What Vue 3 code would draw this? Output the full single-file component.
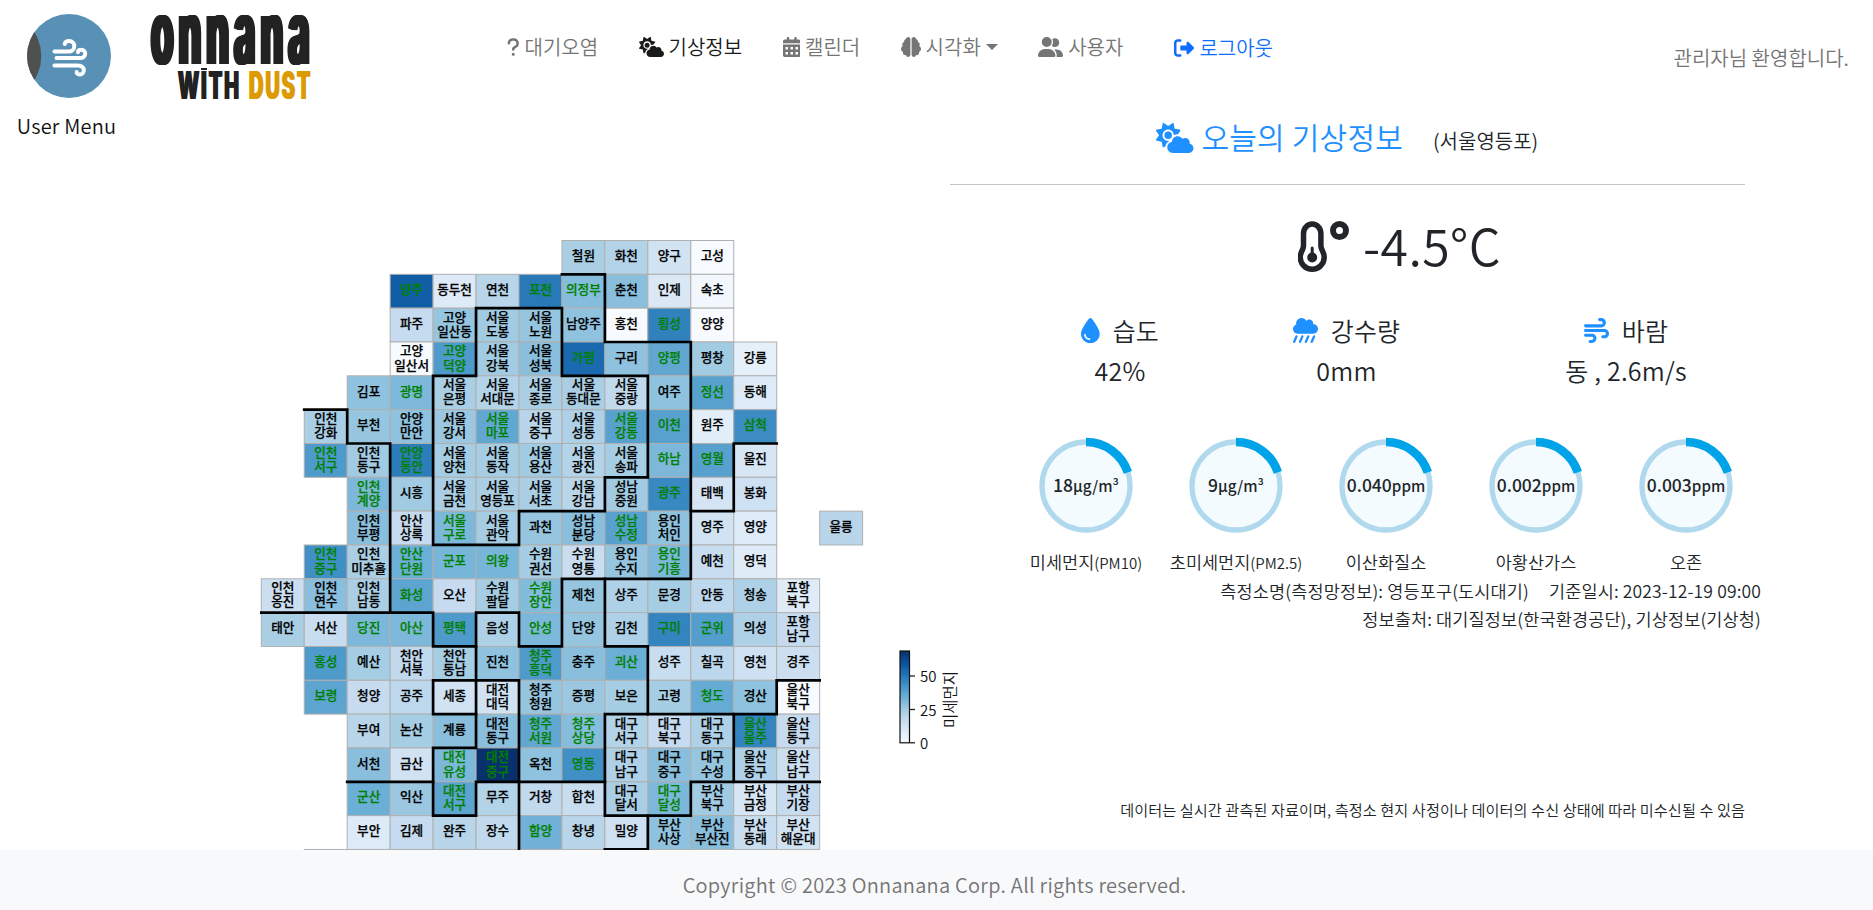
<script setup>
const paths = {
  question: ['0 0 320 512', 'M80 160c0-35.3 28.7-64 64-64h32c35.3 0 64 28.7 64 64v3.6c0 21.8-11.1 42.1-29.4 53.8l-42.2 27.1c-25.2 16.2-40.4 44.1-40.4 74V320c0 17.7 14.3 32 32 32s32-14.3 32-32v-1.4c0-8.2 4.2-15.8 11-20.2l42.2-27.1c36.6-23.6 58.8-64.1 58.8-107.7V160c0-70.7-57.3-128-128-128H144C73.3 32 16 89.3 16 160c0 17.7 14.3 32 32 32s32-14.3 32-32zm80 320a40 40 0 1 0 0-80 40 40 0 1 0 0 80z'],
  cloudSun: ['0 0 640 512', 'M294.2 1.2c5.1 2.1 8.7 6.7 9.6 12.1l14.1 84.7 84.7 14.1c5.4 .9 10 4.5 12.1 9.6s1.5 10.9-1.6 15.4l-38.5 55c-2.2-.1-4.4-.2-6.7-.2c-23.3 0-45.1 6.2-64 17.1l0-1.1c0-53-43-96-96-96s-96 43-96 96s43 96 96 96c8.1 0 15.9-1 23.4-2.9c-36.6 18.1-63.3 53.1-69.8 94.9l-24.4 17c-4.5 3.2-10.3 3.8-15.4 1.6s-8.7-6.7-9.6-12.1L98.1 317.9 13.4 303.8c-5.4-.9-10-4.5-12.1-9.6s-1.5-10.9 1.6-15.4L52.5 208 2.9 137.2c-3.2-4.5-3.8-10.3-1.6-15.4s6.7-8.7 12.1-9.6L98.1 98.1l14.1-84.7c.9-5.4 4.5-10 9.6-12.1s10.9-1.5 15.4 1.6L208 52.5 278.8 2.9c4.5-3.2 10.3-3.8 15.4-1.6zM144 208a64 64 0 1 1 128 0 64 64 0 1 1 -128 0zM639.9 431.9c0 44.2-35.8 80-80 80H288c-53 0-96-43-96-96c0-47.6 34.6-87 80-94.6l0-1.3c0-53 43-96 96-96c34.9 0 65.4 18.6 82.2 46.4c13-9.1 28.8-14.4 45.8-14.4c44.2 0 80 35.8 80 80c0 5.9-.6 11.7-1.9 17.2c37.4 6.7 65.8 39.4 65.8 78.7z'],
  calendar: ['0 0 448 512', 'M128 0c17.7 0 32 14.3 32 32V64H288V32c0-17.7 14.3-32 32-32s32 14.3 32 32V64h48c26.500 0 48 21.500 48 48v48H0V112C0 85.500 21.500 64 48 64H96V32c0-17.700 14.300-32 32-32zM0 192H448V464c0 26.500-21.500 48-48 48H48c-26.500 0-48-21.500-48-48zM64 256v64h64v-64zm128 0v64h64v-64zm128 0v64h64v-64zM64 384v64h64v-64zm128 0v64h64v-64zm128 0v64h64v-64z'],
  brain: ['0 0 512 512', 'M184 0c30.9 0 56 25.1 56 56V456c0 30.9-25.1 56-56 56c-28.9 0-52.7-21.900-55.700-50.100c-5.200 1.400-10.700 2.100-16.300 2.100c-35.300 0-64-28.700-64-64c0-7.400 1.300-14.600 3.600-21.200C21.400 367.400 0 338.200 0 304c0-31.900 18.700-59.500 45.800-72.300C37.100 220.800 32 207 32 192c0-30.700 21.600-56.300 50.400-62.600C80.800 123.900 80 118 80 112c0-29.900 20.600-55.100 48.300-62.100C131.300 21.900 155.100 0 184 0zM328 0c28.900 0 52.700 21.900 55.700 49.900C411.400 56.900 432 82.100 432 112c0 6-.8 11.900-2.400 17.400C458.400 135.700 480 161.300 480 192c0 15-5.100 28.800-13.800 39.700C493.300 244.500 512 272.100 512 304c0 34.200-21.400 63.400-51.600 74.800c2.300 6.600 3.600 13.800 3.600 21.200c0 35.300-28.700 64-64 64c-5.600 0-11.100-.7-16.300-2.100C380.700 490.100 356.900 512 328 512c-30.900 0-56-25.100-56-56V56c0-30.900 25.100-56 56-56z'],
  users: ['0 0 640 512', 'M96 128a128 128 0 1 1 256 0A128 128 0 1 1 96 128zM0 482.300C0 383.800 79.800 304 178.300 304h91.400C368.200 304 448 383.800 448 482.300c0 16.400-13.300 29.700-29.700 29.700H29.700C13.300 512 0 498.700 0 482.300zM609.300 512H471.400c5.400-9.400 8.600-20.300 8.600-32v-8c0-60.700-27.100-115.200-69.800-151.800c2.400-.1 4.700-.2 7.100-.2h61.400C567.800 320 640 392.200 640 481.300c0 17-13.800 30.700-30.700 30.700zM432 256c-31 0-59-12.600-79.300-32.900C372.400 196.500 384 163.600 384 128c0-26.800-6.600-52.100-18.300-74.300C384.300 40.100 407.200 32 432 32c61.900 0 112 50.100 112 112s-50.100 112-112 112z'],
  logout: ['0 0 512 512', 'M377.900 105.900L500.700 228.700c7.200 7.200 11.300 17.100 11.300 27.300s-4.100 20.100-11.300 27.300L377.900 406.100c-6.400 6.400-15 9.900-24 9.900c-18.700 0-33.900-15.200-33.900-33.900l0-62.100-128 0c-17.700 0-32-14.300-32-32l0-64c0-17.700 14.300-32 32-32l128 0 0-62.100c0-18.700 15.200-33.900 33.900-33.900c9 0 17.600 3.600 24 9.900zM160 96L96 96c-17.700 0-32 14.300-32 32l0 256c0 17.700 14.300 32 32 32l64 0c17.700 0 32 14.300 32 32s-14.300 32-32 32l-64 0c-53 0-96-43-96-96L0 128C0 75 43 32 96 32l64 0c17.700 0 32 14.300 32 32s-14.300 32-32 32z'],
  drop: ['0 0 384 512', 'M192 512C86 512 0 426 0 320C0 228.800 130.200 57.700 166.600 11.700C172.600 4.200 181.500 0 191.100 0h1.800c9.600 0 18.500 4.200 24.500 11.700C253.800 57.700 384 228.800 384 320c0 106-86 192-192 192zM96 336c0-8.800-7.200-16-16-16s-16 7.200-16 16c0 61.900 50.100 112 112 112c8.800 0 16-7.200 16-16s-7.200-16-16-16c-44.200 0-80-35.800-80-80z'],
  rain: ['0 0 512 512', 'M96 320c-53 0-96-43-96-96c0-42.500 27.600-78.600 65.900-91.200C64.700 126.100 64 119.100 64 112C64 50.100 114.100 0 176 0c43.100 0 80.500 24.300 99.200 60c14.700-17.100 36.500-28 60.800-28c44.200 0 80 35.800 80 80c0 5.500-.6 10.800-1.600 16c.5 0 1.100 0 1.600 0c53 0 96 43 96 96s-43 96-96 96H96zM81.500 353.900c12.200 5.200 17.800 19.300 12.600 31.500l-48 112c-5.200 12.200-19.300 17.800-31.500 12.600S-3.300 490.700 1.900 478.500l48-112c5.200-12.200 19.300-17.800 31.500-12.600zm120 0c12.200 5.200 17.800 19.300 12.600 31.500l-48 112c-5.200 12.200-19.300 17.800-31.500 12.600s-17.800-19.300-12.600-31.500l48-112c5.200-12.200 19.300-17.800 31.500-12.600zm120 0c12.200 5.200 17.800 19.300 12.600 31.500l-48 112c-5.200 12.200-19.300 17.800-31.500 12.600s-17.800-19.300-12.600-31.500l48-112c5.200-12.200 19.300-17.800 31.500-12.600zm120 0c12.200 5.200 17.800 19.300 12.600 31.500l-48 112c-5.200 12.200-19.300 17.800-31.500 12.600s-17.800-19.300-12.600-31.500l48-112c5.200-12.200 19.300-17.800 31.500-12.600z'],
  wind: ['0 0 512 512', 'M288 32c0 17.700 14.300 32 32 32h32c17.700 0 32 14.300 32 32s-14.300 32-32 32H32c-17.700 0-32 14.300-32 32s14.300 32 32 32H352c53 0 96-43 96-96s-43-96-96-96H320c-17.700 0-32 14.300-32 32zm64 352c0 17.700 14.300 32 32 32h32c53 0 96-43 96-96s-43-96-96-96H32c-17.700 0-32 14.300-32 32s14.300 32 32 32H416c17.700 0 32 14.300 32 32s-14.300 32-32 32H384c-17.700 0-32 14.300-32 32zM128 512h32c53 0 96-43 96-96s-43-96-96-96H32c-17.700 0-32 14.300-32 32s14.300 32 32 32H160c17.700 0 32 14.300 32 32s-14.300 32-32 32H128c-17.700 0-32 14.300-32 32s14.300 32 32 32z'],
}

const nav = [
  { id: 'air', icon: 'question', label: '대기오염' },
  { id: 'active', icon: 'cloudSun', label: '기상정보' },
  { id: 'cal', icon: 'calendar', label: '캘린더' },
  { id: 'viz', icon: 'brain', label: '시각화', caret: true },
  { id: 'user', icon: 'users', label: '사용자' },
  { id: 'out', icon: 'logout', label: '로그아웃' },
]

const stats = [
  { id: 'hum', icon: 'drop', label: '습도', value: '42%' },
  { id: 'rain', icon: 'rain', label: '강수량', value: '0mm' },
  { id: 'wind', icon: 'wind', label: '바람', value: '동 , 2.6m/s' },
]

const gauges = [
  { value: '18', unit: 'μg/m³', label: '미세먼지', sub: '(PM10)' },
  { value: '9', unit: 'μg/m³', label: '초미세먼지', sub: '(PM2.5)' },
  { value: '0.040', unit: 'ppm', label: '이산화질소' },
  { value: '0.002', unit: 'ppm', label: '아황산가스' },
  { value: '0.003', unit: 'ppm', label: '오존' },
]

/* One string per map row: "startColumn|name value,name value"; "/" splits a name over two lines. */
const rowData = [
  '7|철원 23,화천 21,양구 13,고성 0',
  '3|양주 56,동두천 9,연천 20,포천 49,의정부 29.500,춘천 29,인제 10,속초 2',
  '3|파주 17,고양/일산동 27,서울/도봉 25,서울/노원 27,남양주 28,홍천 0,횡성 47,양양 0',
  '3|고양/일산서 0,고양/덕양 40,서울/강북 25,서울/성북 29,가평 53,구리 28,양평 36,평창 25,강릉 6',
  '2|김포 28,광명 31,서울/은평 23,서울/서대문 21,서울/종로 23,서울/동대문 23,서울/중랑 18,여주 28,정선 38,동해 9',
  '1|인천/강화 23,부천 27,안양/만안 28,서울/강서 26,서울/마포 36,서울/중구 20,서울/성동 22,서울/강동 38,이천 38,원주 7,삼척 44',
  '1|인천/서구 40,인천/동구 25,안양/동안 48,서울/양천 24,서울/동작 24,서울/용산 25,서울/광진 21,서울/송파 24,하남 31,영월 38,울진 11',
  '2|인천/계양 31,시흥 25,서울/금천 23,서울/영등포 23,서울/서초 23,서울/강남 20,성남/중원 25,광주 45,태백 12,봉화 14',
  '2|인천/부평 29,안산/상록 17,서울/구로 31,서울/관악 24,과천 27,성남/분당 29,성남/수정 38,용인/처인 28,영주 13,영양 9',
  '1|인천/중구 43,인천/미추홀 23,안산/단원 34,군포 32,의왕 32,수원/권선 24,수원/영통 16,용인/수지 27,용인/기흥 31,예천 16,영덕 8',
  '0|인천/옹진 15,인천/연수 29,인천/남동 23,화성 37,오산 17,수원/팔달 24,수원/장안 30,제천 27,상주 22,문경 24,안동 19,청송 22,포항/북구 8',
  '0|태안 23,서산 16,당진 31,아산 31,평택 40,음성 22,안성 31,단양 27,김천 22,구미 46,군위 39,의성 22,포항/남구 17',
  '1|홍성 40,예산 24,천안/서북 18,천안/동남 24,진천 28,청주/흥덕 40,충주 29,괴산 34,성주 16,칠곡 19,영천 14,경주 15',
  '1|보령 37,청양 17,공주 19,세종 13,대전/대덕 13,청주/청원 27,증평 26,보은 24,고령 24,청도 35,경산 28,울산/북구 0',
  '2|부여 20,논산 24,계룡 29,대전/동구 29,청주/서원 36,청주/상당 29.500,대구/서구 21,대구/북구 17,대구/동구 22,울산/울주 46,울산/동구 17',
  '2|서천 29,금산 13,대전/유성 31,대전/중구 68,옥천 28,영동 43,대구/남구 22,대구/중구 29,대구/수성 27,울산/중구 22,울산/남구 15',
  '2|군산 34,익산 26,대전/서구 37,무주 21,거창 18,합천 16,대구/달서 23,대구/달성 31,부산/북구 25,부산/금정 11,부산/기장 17',
  '2|부안 9,김제 17,완주 20,장수 18,함양 33,창녕 20,밀양 14,부산/사상 28,부산/부산진 29,부산/동래 16,부산/해운대 13',
]

const blues = [[247, 251, 255], [222, 235, 247], [198, 219, 239], [158, 202, 225], [107, 174, 214], [66, 146, 198], [33, 113, 181], [8, 81, 156], [8, 48, 107]]
function shade(v) {
  const t = Math.min(v / 68, 1) * 8
  const i = Math.min(Math.floor(t), 7)
  const f = t - i
  return `rgb(${blues[i].map((c, k) => Math.round(c + (blues[i + 1][k] - c) * f)).join(',')})`
}

const CW = 42.95
const CH = 33.83
const X0 = 11.3
const Y0 = 10.5
const gx = (c) => +(X0 + c * CW).toFixed(2)
const gy = (r) => +(Y0 + r * CH).toFixed(2)

const cells = []
function addCell(col, row, name, v) {
  cells.push({ key: `${col}-${row}`, x: gx(col), y: gy(row), fill: shade(v), lines: name.split('/'), hot: v >= 29.5 })
}
rowData.forEach((line, r) => {
  const [start, list] = line.split('|')
  list.split(',').forEach((item, i) => {
    const [name, v] = item.split(' ')
    addCell(+start + i, r, name, +v)
  })
})
addCell(13, 8, '울릉', 20)

const slivers = [
  { c: 1, v: 29 }, { c: 2, v: 20 }, { c: 3, v: 38 }, { c: 4, v: 23 }, { c: 5, v: 24 }, { c: 6, v: 28 },
].map((s) => ({ x: gx(s.c), fill: shade(s.v) }))

const borders = [
  [[7, 1], [8, 1], [8, 3], [10, 3], [10, 10], [7, 10], [7, 12], [6, 12], [6, 11], [5, 11], [5, 15], [4, 15], [4, 17], [5, 17], [5, 16], [8, 16]],
  [[5, 2], [7, 2], [7, 4], [9, 4], [9, 7], [8, 7], [8, 8], [6, 8], [6, 9], [4, 9], [4, 4], [5, 4], [5, 2]],
  [[12, 6], [11, 6], [11, 8], [10, 8]],
  [[1, 5], [2, 5], [2, 6], [3, 6], [3, 11]],
  [[0, 11], [4, 11], [4, 12], [5, 12]],
  [[5, 13], [4, 13], [4, 14], [5, 14]],
  [[5, 13], [6, 13], [6, 18]],
  [[2, 16], [4, 16]],
  [[8, 10], [8, 12], [9, 12], [9, 14]],
  [[13, 13], [12, 13], [12, 14], [8, 14], [8, 17], [10, 17], [10, 16], [13, 16]],
  [[11, 14], [11, 16]],
  [[9, 17], [9, 18], [8, 18]],
].map((b) => b.map(([c, r]) => `${gx(c)},${gy(r)}`).join(' '))

const stops = blues.map((c, i) => ({ o: i / 8, c: `rgb(${c.join(',')})` }))
const ticks = [{ y: 446, t: '50' }, { y: 479.5, t: '25' }, { y: 512.8, t: '0' }]
</script>

<template>
  <div class="page">
    <header class="header">
      <div class="user-menu">
        <svg class="avatar" viewBox="0 0 84 84">
          <defs><clipPath id="disc"><circle cx="42" cy="42" r="42" /></clipPath></defs>
          <circle cx="42" cy="42" r="42" fill="#5891b5" />
          <circle cx="-30" cy="42" r="44.300" fill="#4f5150" clip-path="url(#disc)" />
          <g fill="none" stroke="#fff" stroke-width="4" stroke-linecap="round">
            <path d="M27.500 37.500H42c7 0 7-10.500 0-10.500c-2.500 0-4 1.500-4.300 3" />
            <path d="M29.500 44H53c7 0 6.500-8.500 1-8.300c-2 0-3 1.300-3 2.600" />
            <path d="M27.500 51.500H51c8 0 7 9.300 1.500 9c-2 0-3-1.300-2.800-2.500" />
          </g>
        </svg>
        <span class="user-label">User Menu</span>
      </div>
      <div class="logo">
        <div class="logo-top">onnana</div>
        <div class="logo-bottom"><span class="with">WITH</span><span class="dust">DUST</span></div>
      </div>
      <nav class="nav">
        <a v-for="n in nav" :key="n.id" :class="['link', n.id]">
          <svg class="ico" :viewBox="paths[n.icon][0]"><path :d="paths[n.icon][1]" fill="currentColor" fill-rule="evenodd" /></svg>
          <span>{{ n.label }}</span>
          <i v-if="n.caret" class="caret"></i>
        </a>
      </nav>
      <span class="welcome">관리자님 환영합니다.</span>
    </header>

    <main class="main">
      <svg class="map" viewBox="0 0 720 620" width="720" height="620">
        <defs>
          <linearGradient id="scale" x1="0" y1="1" x2="0" y2="0">
            <stop v-for="s in stops" :key="s.o" :offset="s.o" :stop-color="s.c" />
          </linearGradient>
        </defs>
        <rect v-for="s in slivers" :key="s.x" class="cell" :x="s.x" :y="gy(18)" :width="CW" height="20" :fill="s.fill" />
        <g v-for="c in cells" :key="c.key">
          <rect class="cell" :x="c.x" :y="c.y" :width="CW" :height="CH" :fill="c.fill" />
          <text
            v-for="(l, i) in c.lines"
            :key="i"
            :class="['name', { hot: c.hot }]"
            :x="c.x + CW / 2"
            :y="c.y + (c.lines.length === 1 ? 19.700 : 13.400 + i * 14.200)"
          >{{ l }}</text>
        </g>
        <polyline v-for="(b, i) in borders" :key="i" class="border" :points="b" />
        <rect x="650" y="421" width="9.500" height="91.800" fill="url(#scale)" stroke="#111" stroke-width="1.200" />
        <g v-for="t in ticks" :key="t.t">
          <line x1="660" x2="665" :y1="t.y" :y2="t.y" stroke="#222" stroke-width="1.300" />
          <text class="tick" x="670" :y="t.y + 6">{{ t.t }}</text>
        </g>
        <text class="axis" transform="translate(706 469.500) rotate(-90)">미세먼지</text>
      </svg>

      <section class="today">
        <h2 class="title">
          <svg class="ico" :viewBox="paths.cloudSun[0]"><path :d="paths.cloudSun[1]" fill="currentColor" fill-rule="evenodd" /></svg>
          <span class="title-text">오늘의 기상정보</span>
          <span class="place">(서울영등포)</span>
        </h2>
        <div class="temp">
          <svg class="thermo" viewBox="0 0 51 51">
            <g fill="none" stroke="currentColor">
              <path stroke-width="5.500" d="M5.500 12.500a8.700 9.500 0 0 1 17.400 0V25c0 3.500 3.300 6 3.300 11.200a12 12 0 0 1-24 0C2.200 31 5.500 28.500 5.500 25z" />
              <path stroke-width="3" stroke-linecap="round" d="M14.200 27V36" />
              <circle cx="41.500" cy="9.500" r="6.500" stroke-width="6" />
            </g>
            <circle cx="14.200" cy="36.500" r="5" fill="currentColor" />
          </svg>
          <span>-4.5°C</span>
        </div>
        <div class="stats">
          <div v-for="s in stats" :key="s.id" class="stat">
            <div class="stat-head">
              <svg class="ico" :viewBox="paths[s.icon][0]"><path :d="paths[s.icon][1]" fill="currentColor" fill-rule="evenodd" /></svg>
              <span>{{ s.label }}</span>
            </div>
            <div>{{ s.value }}</div>
          </div>
        </div>
        <div class="gauges">
          <div v-for="g in gauges" :key="g.label" class="gauge">
            <svg class="ring" viewBox="0 0 100 100">
              <circle cx="50" cy="50" r="44" fill="#f4fbff" stroke="#b0d9ee" stroke-width="5.300" />
              <path d="M50 6A44 44 0 0 1 91.850 36.400" fill="none" stroke="#00a3e8" stroke-width="8.700" />
              <text x="50" y="56.300" class="g-val">{{ g.value }}<tspan class="g-unit">{{ g.unit }}</tspan></text>
            </svg>
            <div class="g-label">{{ g.label }}<small v-if="g.sub">{{ g.sub }}</small></div>
          </div>
        </div>
        <div class="source">
          <div><span>측정소명(측정망정보): 영등포구(도시대기)</span><span class="when">기준일시: 2023-12-19 09:00</span></div>
          <div>정보출처: 대기질정보(한국환경공단), 기상정보(기상청)</div>
        </div>
        <p class="notice">데이터는 실시간 관측된 자료이며, 측정소 현지 사정이나 데이터의 수신 상태에 따라 미수신될 수 있음</p>
      </section>
    </main>

    <footer class="footer">Copyright © 2023 Onnanana Corp. All rights reserved.</footer>
  </div>
</template>

<style>
body {
  margin: 0;
  background: #fff;
  overflow: hidden;
}
</style>

<style scoped>
.page {
  width: 1873px;
  height: 910px;
  display: flex;
  flex-direction: column;
  overflow: hidden;
  font-family: "Noto Sans CJK KR", "Noto Sans", sans-serif;
  font-weight: 350;
  font-size: 20px;
  line-height: 30px;
  color: #212529;
}
.header {
  height: 150px;
  flex: none;
  display: flex;
  align-items: flex-start;
}
.user-menu {
  width: 133px;
  flex: none;
  padding-top: 14px;
  display: flex;
  flex-direction: column;
  align-items: center;
  gap: 13px;
}
.avatar {
  width: 84px;
  height: 84px;
  margin-left: 4px;
}
.user-label {
  color: #111;
  letter-spacing: .200px;
  white-space: nowrap;
}
.logo {
  position: relative;
  width: 166px;
  height: 92px;
  margin: 12px 0 0 18px;
  flex: none;
  font-family: Inter, Roboto, sans-serif;
  white-space: nowrap;
  color: #222;
}
.logo-top {
  height: 36px;
  font-size: 36px;
  line-height: 36px;
  font-weight: 700;
  letter-spacing: 5.400px;
  text-shadow: 1px 0, -1px 0, 2px 0, -2px 0, 2.500px 0;
  transform: translateY(-24.500px) scaleY(2.460);
  transform-origin: 0 0;
}
.logo-bottom {
  display: flex;
  gap: 9px;
  margin-left: 27px;
  height: 20px;
  font-size: 20px;
  line-height: 20px;
  font-weight: 800;
  letter-spacing: 1.900px;
  text-shadow: .7px 0, -.7px 0;
  transform: translateY(18.400px) scaleY(1.930);
  transform-origin: 0 0;
}
.logo::after {
  content: "";
  position: absolute;
  left: 50px;
  top: 56px;
  width: 6px;
  height: 1.500px;
  background: #222;
}
.with {
  width: 62px;
}
.dust {
  color: #dc9a04;
}
.nav {
  flex: none;
  display: flex;
  margin: 30px 0 0 190px;
  color: #757575;
}
.link {
  display: flex;
  align-items: center;
  gap: 5px;
  margin-right: 40.400px;
  white-space: nowrap;
}
.link .ico {
  height: 20px;
}
.link.active {
  color: #1a1a1a;
}
.link.user {
  margin-right: 51px;
}
.link.out {
  color: #0d6efd;
  padding-top: 3px;
  margin-right: 0;
}
.caret {
  border: 6px solid transparent;
  border-top-color: currentColor;
  border-bottom: 0;
}
.welcome {
  margin: 43px 24px 0 auto;
  color: #757575;
  white-space: nowrap;
}
.main {
  height: 700px;
  flex: none;
  display: flex;
}
.map {
  flex: none;
  margin: 80px 0 0 250px;
}
.cell {
  stroke: #b0b0b0;
  stroke-width: 1;
}
.name {
  font-size: 12.600px;
  font-weight: 500;
  text-anchor: middle;
  fill: #000;
  stroke: #000;
  stroke-width: .250px;
}
.name.hot {
  fill: #008000;
  stroke: #008000;
}
.border {
  fill: none;
  stroke: #000;
  stroke-width: 2.700;
  stroke-linecap: square;
}
.tick {
  font-size: 15px;
  fill: #111;
}
.axis {
  font-size: 15.500px;
  text-anchor: middle;
  fill: #111;
}
.today {
  width: 810px;
  flex: none;
  margin: -50px 0 0 -20px;
}
.title {
  width: 795px;
  height: 85px;
  margin: 0;
  box-sizing: border-box;
  border-bottom: 1px solid #c5c5c5;
  padding: 14px 0 0 206px;
  display: flex;
  align-items: flex-start;
  font-size: 30px;
  font-weight: inherit;
  line-height: 44px;
  color: #1e90ff;
  white-space: nowrap;
}
.title .ico {
  height: 30px;
  margin: 9px 8px 0 0;
}
.title-text {
  letter-spacing: .200px;
}
.place {
  margin: 5px 0 0 30px;
  font-size: 20px;
  color: #212529;
}
.temp {
  display: flex;
  padding: 36px 0 0 348px;
  height: 52px;
  gap: 14px;
  font-size: 50px;
  line-height: 46px;
  letter-spacing: .400px;
}
.thermo {
  width: 51px;
  height: 51px;
}
.stats {
  display: grid;
  grid-template-columns: 226px 227px 332px;
  font-size: 25px;
  line-height: 40px;
  text-align: center;
  letter-spacing: .200px;
  margin: 37px 0 0 57px;
  height: 80px;
}
.stat-head {
  display: flex;
  align-items: center;
  justify-content: center;
  gap: 13px;
}
.stat .ico {
  height: 25px;
  color: #1e90ff;
}
.gauges {
  display: flex;
  margin: 45.500px 0 0 61px;
}
.gauge {
  width: 150px;
  flex: none;
  text-align: center;
}
.ring {
  display: block;
  width: 100px;
  height: 100px;
  margin: 0 auto;
}
.g-val {
  font-size: 17.500px;
  font-weight: 500;
  text-anchor: middle;
  fill: #212529;
}
.g-unit {
  font-size: 15.200px;
}
.g-label {
  margin-top: 12.500px;
  font-size: 17.500px;
  line-height: 28px;
  white-space: nowrap;
}
.g-label small {
  font-size: 15px;
}
.source {
  width: 811px;
  text-align: right;
  font-size: 17.500px;
  line-height: 28px;
  letter-spacing: .140px;
  white-space: nowrap;
}
.when {
  margin-left: 20px;
}
.notice {
  width: 795px;
  margin: 165px 0 0;
  text-align: right;
  font-size: 15.200px;
  line-height: 22px;
  letter-spacing: .070px;
  white-space: nowrap;
}
.footer {
  height: 60px;
  flex: none;
  box-sizing: border-box;
  padding: 20px 4px 0 0;
  background: #f8f9fa;
  text-align: center;
  letter-spacing: .260px;
  color: #757575;
}
</style>
